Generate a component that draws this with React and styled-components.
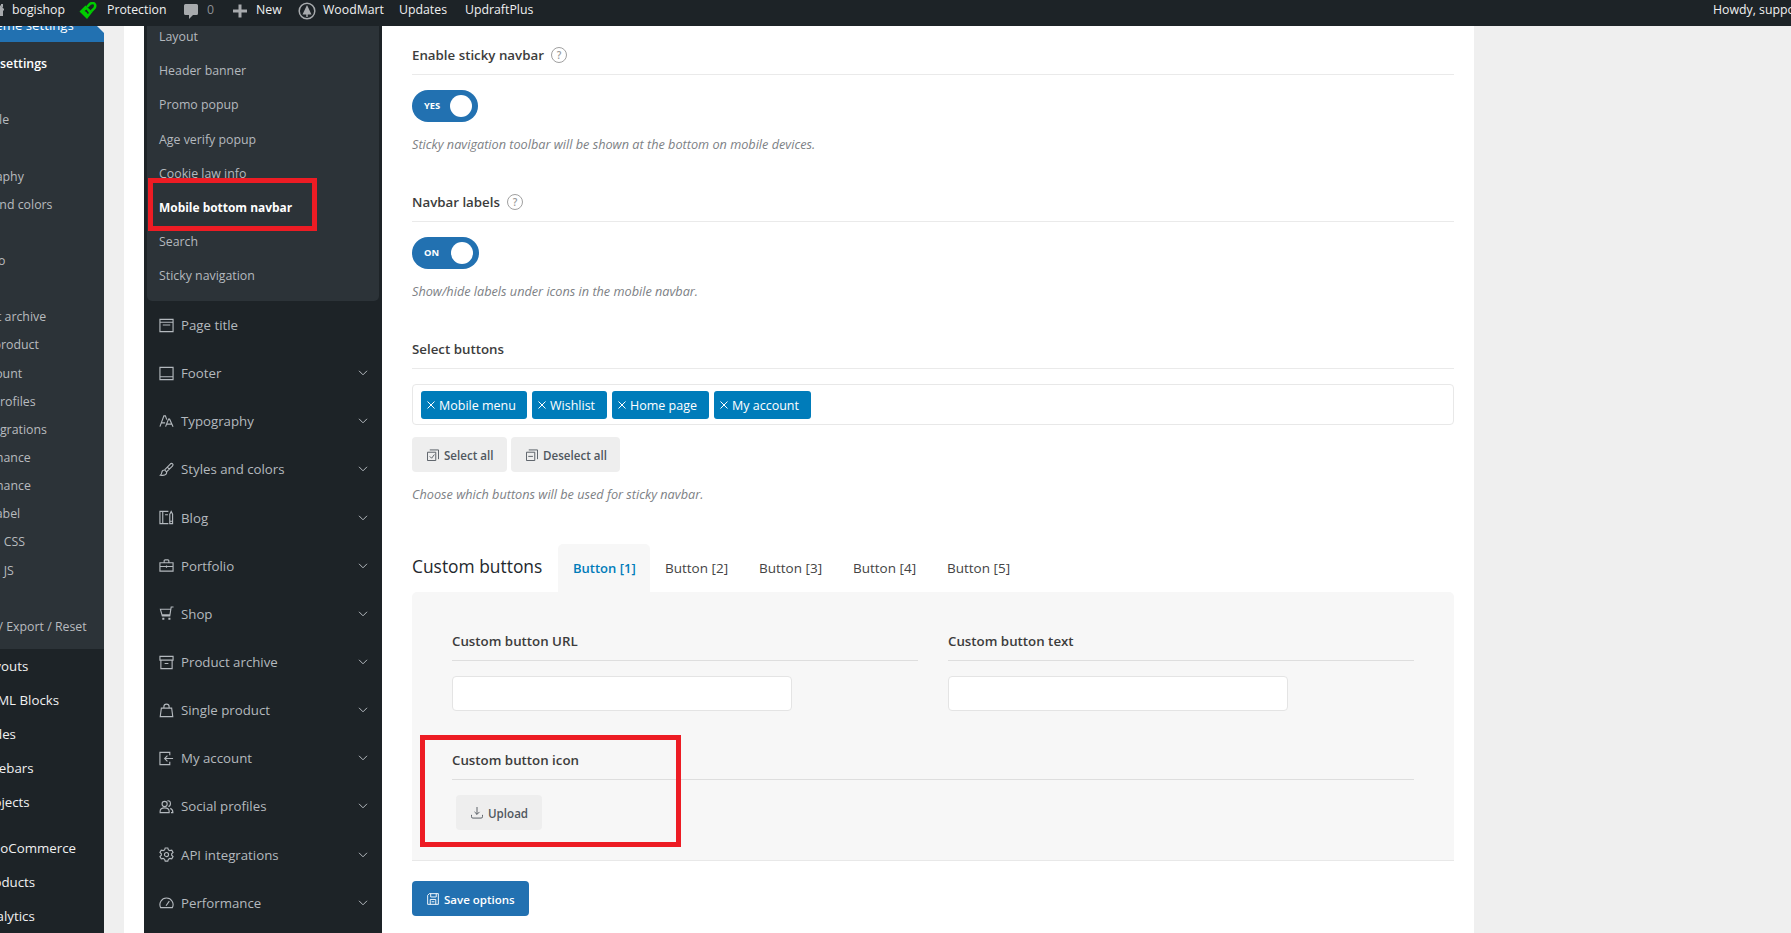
import styled, { createGlobalStyle } from "styled-components";

const ADMIN_MENU = [
  "Layout",
  "Page title",
  "Footer",
  "Typography",
  "Styles and colors",
  "Blog",
  "Portfolio",
  "Shop",
  "Product archive",
  "Single product",
  "My account",
  "Social profiles",
  "API integrations",
  "Performance",
  "Maintenance",
  "White label",
  "Custom CSS",
  "Custom JS",
  "Import",
  "Import / Export / Reset",
];

const SUB_NAV = [
  "Layout",
  "Header banner",
  "Promo popup",
  "Age verify popup",
  "Cookie law info",
  "Mobile bottom navbar",
  "Search",
  "Sticky navigation",
];

const ICONS = {
  page: <path d="M1 1.5h14v13H1zM1 4.5h14M4 7.5h8" />,
  footer: <path d="M1 1.5h14v13H1zM1 11.5h14" />,
  type: <path d="M1 13.5 5.2 2h1.6l1.5 4M2.5 9.5h4M7 13.5l3.2-8h1.1l3.7 8M8.3 10.8h5" />,
  brush: (
    <path d="M6 8.5 12 2.2q1.500-1.200 2.500-.2t-.2 2.500L8 10.500M6 8.500q-2.600-.2-3 2.500-.2 2-1.500 3 4.500.8 6-1 1-1.500.5-2.500zM9 5.500l2 2" />
  ),
  blog: <path d="M10 1.500H1v13h9M4 1.500v13M6.500 5h3M11.500 4.500l1.500-3 1.500 3v10h-3zM11.500 12h3" />,
  portfolio: <path d="M1 5h14v9H1zM5.500 5V3q0-1 1-1h3q1 0 1 1v2M1 9h14M8 8v2.500" />,
  shop: (
    <>
      <path d="M15.500 1H13l-1.500 9.500h-8l-2-7h11M3 9.500h8.500" />
      <path d="M3.500 12.500h2.200v2.200H3.500zM10 12.500h2.200v2.200H10z" fill="#b4b9be" stroke="none" />
    </>
  ),
  archive: <path d="M1 1.500h14v4H1zM2 5.500v9h12v-9M6 9h4" />,
  bag: <path d="M2.500 5.500h11l1.200 9H1.300zM5.200 5.500V4a2.800 2.800 0 0 1 5.600 0v1.500" />,
  account: <path d="M11.500 4.500v-3H1v13h10.500v-3M15 8H6M9 5 6 8l3 3" />,
  social: (
    <path d="M6 2.500a2.500 2.500 0 1 1 0 5.500 2.500 2.500 0 0 1 0-5.500M1.200 14.500V13q0-3.500 4.800-3.500t4.800 3.500v1.500zM9 2q3-.5 3.200 2.500T10 8M12 10q2.800 1 2.800 4.500h-2" />
  ),
  api: (
    <>
      <path d="M6.600 1h2.800l.6 2 1.500.9 2.100-.5 1.400 2.400-1.500 1.500v1.500l1.500 1.500-1.400 2.400-2.100-.5-1.500.9-.6 1.900H6.600L6 13.100l-1.500-.9-2.100.5L1 10.300l1.500-1.500V7.300L1 5.800l1.400-2.400 2.100.5L6 3z" />
      <circle cx="8" cy="8" r="2.200" />
    </>
  ),
  gauge: <path d="M1.800 13.500a7 7 0 1 1 12.400 0zM7.500 11.500l3.500-5" />,
};

const NAV = [
  { label: "Page title", icon: "page", leaf: true },
  { label: "Footer", icon: "footer" },
  { label: "Typography", icon: "type" },
  { label: "Styles and colors", icon: "brush" },
  { label: "Blog", icon: "blog" },
  { label: "Portfolio", icon: "portfolio" },
  { label: "Shop", icon: "shop" },
  { label: "Product archive", icon: "archive" },
  { label: "Single product", icon: "bag" },
  { label: "My account", icon: "account" },
  { label: "Social profiles", icon: "social" },
  { label: "API integrations", icon: "api" },
  { label: "Performance", icon: "gauge" },
];

const TAGS = [
  { label: "Mobile menu", width: 106 },
  { label: "Wishlist", width: 75 },
  { label: "Home page", width: 97 },
  { label: "My account", width: 97 },
];

const App = () => {
  return (
    <Page>
      <GlobalStyle />
      <AdminBar>
        <BarItem $width={79}>
          <HomeIcon viewBox="0 0 5 16">
            <path d="M0 3l4 4v1.500H3V14H0zM1 2h2v3.500L1 4z" fill="#a7aaad" />
          </HomeIcon>
          bogishop
        </BarItem>
        <BarItem $width={104}>
          <LockIcon viewBox="0 0 18 18">
            <path d="m.5 9.500 6-6 7 6.500-5.500 7z" fill="#0c0" />
            <path d="m8 5 3-3.200q3-1.800 4.500 0t0 4.200l-3 3.200" fill="none" stroke="#0c0" strokeWidth="2.500" />
            <path d="m5.500 9 2-1.500 1 1.500 1.500 2-1.200 1-1.500-2z" fill="#1d2327" />
          </LockIcon>
          Protection
        </BarItem>
        <BarItem $width={50} $dim>
          <CommentIcon viewBox="0 0 14 15">
            <path d="M1.500 0h11Q14 0 14 1.500v8q0 1.500-1.500 1.500H9l-4 4v-4H1.500Q0 11 0 9.500v-8Q0 0 1.500 0" fill="#a7aaad" />
          </CommentIcon>
          0
        </BarItem>
        <BarItem $width={65}>
          <PlusIcon viewBox="0 0 14 14">
            <path d="M5.500.5h3v5H14v3H8.500v5h-3v-5H0v-3h5.500z" fill="#a7aaad" />
          </PlusIcon>
          New
        </BarItem>
        <BarItem $width={101}>
          <WoodIcon viewBox="0 0 18 18">
            <circle cx="9" cy="9" r="7.800" fill="none" stroke="#a7aaad" strokeWidth="1.500" />
            <path d="m9 3 4.500 9.500H9.700V15H8.300v-2.500H4.500z" fill="#a7aaad" />
          </WoodIcon>
          WoodMart
        </BarItem>
        <BarItem $width={66}>Updates</BarItem>
        <BarItem $width={80}>UpdraftPlus</BarItem>
        <Howdy>Howdy, support</Howdy>
      </AdminBar>

      <Body>
        <AdminMenu>
          <CurrentItem>Theme settings</CurrentItem>
          <AdminSubMenu>
            <AdminSubItem $active>Theme settings</AdminSubItem>
            {ADMIN_MENU.map((item) => (
              <AdminSubItem key={item}>{item}</AdminSubItem>
            ))}
          </AdminSubMenu>
          <AdminGroup>
            <AdminItem>Layouts</AdminItem>
            <AdminItem>HTML Blocks</AdminItem>
            <AdminItem>Slides</AdminItem>
            <AdminItem>Sidebars</AdminItem>
            <AdminItem>Projects</AdminItem>
          </AdminGroup>
          <AdminGroup>
            <AdminItem>WooCommerce</AdminItem>
            <AdminItem>Products</AdminItem>
            <AdminItem>Analytics</AdminItem>
          </AdminGroup>
        </AdminMenu>

        <Panel>
          <Nav>
            <SubNav>
              {SUB_NAV.map((item) => (
                <SubNavItem key={item} $active={item === "Mobile bottom navbar"}>
                  {item}
                  {item === "Mobile bottom navbar" && <NavMarker />}
                </SubNavItem>
              ))}
            </SubNav>
            {NAV.map(({ label, icon, leaf }) => (
              <NavItem key={label}>
                <NavIcon viewBox="0 0 16 16">{ICONS[icon]}</NavIcon>
                <NavLabel>{label}</NavLabel>
                {!leaf && (
                  <Chevron viewBox="0 0 10 6">
                    <path d="m1 .8 4 4 4-4" />
                  </Chevron>
                )}
              </NavItem>
            ))}
          </Nav>

          <Content>
            <Field $height={147}>
              <FieldTitle>
                Enable sticky navbar <Help>?</Help>
              </FieldTitle>
              <Toggle $width={66}>
                YES <Knob />
              </Toggle>
              <Description>
                Sticky navigation toolbar will be shown at the bottom on mobile devices.
              </Description>
            </Field>

            <Field $height={147}>
              <FieldTitle>
                Navbar labels <Help>?</Help>
              </FieldTitle>
              <Toggle $width={67}>
                ON <Knob />
              </Toggle>
              <Description>Show/hide labels under icons in the mobile navbar.</Description>
            </Field>

            <Field $height={208}>
              <FieldTitle>Select buttons</FieldTitle>
              <TagBox>
                {TAGS.map(({ label, width }) => (
                  <Tag key={label} $width={width}>
                    <Cross viewBox="0 0 8 8">
                      <path d="m.5.500 7 7m0-7-7 7" />
                    </Cross>
                    {label}
                  </Tag>
                ))}
              </TagBox>
              <ButtonRow>
                <Button $width={95}>
                  <ButtonIcon viewBox="0 0 13 13">
                    <path d="M.5 3.500h9v9h-9zM3 1h9.500v10M3 8l2 2 3-4" />
                  </ButtonIcon>
                  Select all
                </Button>
                <Button $width={109}>
                  <ButtonIcon viewBox="0 0 13 13">
                    <path d="M.5 3.500h9v9h-9zM3 1h9.500v10M2.500 8h5" />
                  </ButtonIcon>
                  Deselect all
                </Button>
              </ButtonRow>
              <Description>Choose which buttons will be used for sticky navbar.</Description>
            </Field>

            <TabRow>
              <TabHeading>Custom buttons</TabHeading>
              {[1, 2, 3, 4, 5].map((n) => (
                <Tab key={n} $active={n === 1}>
                  Button [{n}]
                </Tab>
              ))}
            </TabRow>
            <TabPanel>
              <Columns>
                <Column>
                  <FieldTitle $boxed>Custom button URL</FieldTitle>
                  <Input />
                </Column>
                <Column>
                  <FieldTitle $boxed>Custom button text</FieldTitle>
                  <Input />
                </Column>
              </Columns>
              <IconField>
                <FieldTitle $boxed>Custom button icon</FieldTitle>
                <UploadRow>
                  <Button $width={86}>
                    <ButtonIcon viewBox="0 0 13 13">
                      <path d="M6.500 0v8M3.800 5.300 6.500 8l2.700-2.700M.5 8.500v2Q.5 12 2 12h9q1.500 0 1.500-1.500v-2" />
                    </ButtonIcon>
                    Upload
                  </Button>
                </UploadRow>
                <IconMarker />
              </IconField>
            </TabPanel>

            <SaveRow>
              <Button $width={117} $primary>
                <ButtonIcon viewBox="0 0 13 13">
                  <path d="M2.500.7h9.800v11.600H.7V2.500zM4 .7v3.600h6V.7M3.500 12.300V7h6v5.300M5 9.500h3" />
                </ButtonIcon>
                Save options
              </Button>
            </SaveRow>
          </Content>
        </Panel>
      </Body>
    </Page>
  );
};

const GlobalStyle = createGlobalStyle`
  * {
    box-sizing: border-box;
  }

  body {
    margin: 0;
    overflow: hidden;
    background: #efefef;
    font-family: "Segoe UI", "Open Sans", "Noto Sans", sans-serif;
  }
`;

const Page = styled.div`
  width: 1791px;
  height: 933px;
  overflow: hidden;
`;

const AdminBar = styled.header`
  display: flex;
  height: 26px;
  background: #1d2327;
  color: #f0f0f1;
  font-size: 12.3px;
  line-height: 20px;
  white-space: nowrap;
  overflow: hidden;
`;

const BarItem = styled.div`
  display: flex;
  align-items: center;
  flex: none;
  width: ${(props) => props.$width}px;
  height: 20px;
  color: ${(props) => props.$dim && "#8c8f94"};
`;

const BarIcon = styled.svg`
  flex: none;
  display: block;
`;

const HomeIcon = styled(BarIcon)`
  width: 5px;
  height: 16px;
  margin-right: 7px;
`;

const LockIcon = styled(BarIcon)`
  width: 18px;
  height: 18px;
  margin: 2px 10px 0 0;
`;

const CommentIcon = styled(BarIcon)`
  width: 14px;
  height: 15px;
  margin: 3px 9px 0 1px;
`;

const PlusIcon = styled(BarIcon)`
  width: 14px;
  height: 14px;
  margin: 1px 9px 0 0;
`;

const WoodIcon = styled(BarIcon)`
  width: 18px;
  height: 18px;
  margin: 1px 7px 0 0;
`;

const Howdy = styled.div`
  flex: none;
  width: 78px;
  margin-left: auto;
  overflow: hidden;
`;

const Body = styled.div`
  display: flex;
  height: 907px;
  overflow: hidden;
`;

const AdminMenu = styled.aside`
  flex: none;
  width: 104px;
  background: #1d2327;
  color: #f0f0f1;
  white-space: nowrap;
  overflow: hidden;
`;

const CurrentItem = styled.div`
  position: relative;
  height: 34px;
  margin-top: -18px;
  background: #2271b1;
  color: white;
  font-size: 13.2px;
  line-height: 34px;
  text-indent: -20px;

  &::after {
    content: "";
    position: absolute;
    right: 0;
    top: 9px;
    border: 8px solid transparent;
    border-right-color: #efefef;
  }
`;

const AdminSubMenu = styled.div`
  height: 607px;
  padding-top: 8px;
  background: #2c3338;
`;

const AdminSubItem = styled.div`
  height: 28.15px;
  color: ${(props) => (props.$active ? "white" : "#b8bbbf")};
  font-size: 12.35px;
  font-weight: ${(props) => (props.$active ? 600 : 400)};
  line-height: 28px;
  text-indent: -44px;
`;

const AdminGroup = styled.div`
  margin-bottom: 12px;
`;

const AdminItem = styled.div`
  height: 34px;
  font-size: 13.3px;
  line-height: 34px;
  text-indent: -20px;
`;

const Panel = styled.div`
  display: flex;
  width: 1350px;
  margin-left: 20px;
  padding-left: 20px;
  background: white;
`;

const Nav = styled.nav`
  flex: none;
  width: 238px;
  height: 907px;
  padding: 0 3px;
  background: #1d2327;
  color: #b4b9be;
  overflow: hidden;
`;

const SubNav = styled.div`
  height: 275px;
  padding: 0 12px;
  border-radius: 0 0 5px 5px;
  background: #2c3338;
  overflow: hidden;
`;

const SubNavItem = styled.div`
  position: relative;
  height: 34.2px;
  color: ${(props) => (props.$active ? "white" : "#b4b9be")};
  font-size: ${(props) => (props.$active ? 11.95 : 12.35)}px;
  font-weight: ${(props) => (props.$active ? 700 : 400)};
  line-height: 34px;

  &:first-child {
    margin-top: -6px;
  }
`;

const Marker = styled.div`
  position: absolute;
  border: 5px solid #ed1c24;
`;

const NavMarker = styled(Marker)`
  left: -11px;
  top: -13px;
  width: 169px;
  height: 53px;
`;

const NavItem = styled.div`
  display: flex;
  align-items: center;
  height: 48.15px;
  padding: 0 11px 0 12px;
`;

const NavIcon = styled.svg`
  flex: none;
  width: 15px;
  height: 15px;
  fill: none;
  stroke: #b4b9be;
  stroke-width: 1.2;
`;

const NavLabel = styled.span`
  flex: 1;
  margin-left: 7px;
  font-size: 13.25px;
`;

const Chevron = styled.svg`
  width: 10px;
  height: 6px;
  fill: none;
  stroke: #b4b9be;
`;

const Content = styled.main`
  width: 1092px;
  padding: 11px 20px 0 30px;
`;

const Field = styled.section`
  height: ${(props) => props.$height}px;
`;

const FieldTitle = styled.h3`
  display: flex;
  align-items: center;
  gap: 7px;
  height: 38px;
  margin: 0 0 15px;
  padding-bottom: 2px;
  border-bottom: 1px solid ${(props) => (props.$boxed ? "#dedede" : "#eaeaea")};
  color: #3c3c3c;
  font-size: 13.3px;
  font-weight: 550;
`;

const Help = styled.span`
  width: 16px;
  height: 16px;
  border: 1px solid #a0a0a0;
  border-radius: 50%;
  color: #999;
  font-size: 10px;
  font-weight: 600;
  line-height: 14px;
  text-align: center;
`;

const Toggle = styled.div`
  display: flex;
  align-items: center;
  justify-content: space-between;
  width: ${(props) => props.$width}px;
  height: 32px;
  padding: 0 6px 0 12px;
  border-radius: 16px;
  background: #2271b1;
  color: white;
  font-size: 9.4px;
  font-weight: 700;
  line-height: 12px;
`;

const Knob = styled.span`
  width: 22px;
  height: 22px;
  border-radius: 50%;
  background: white;
`;

const Description = styled.p`
  margin: 12px 0 0;
  color: #7d8185;
  font-size: 12.7px;
  font-style: italic;
  line-height: 20px;
`;

const TagBox = styled.div`
  display: flex;
  gap: 5px;
  height: 41px;
  padding: 6px 8px;
  border: 1px solid #e8e8e8;
  border-radius: 4px;
`;

const Tag = styled.div`
  display: flex;
  align-items: center;
  gap: 4px;
  width: ${(props) => props.$width}px;
  height: 28px;
  padding-left: 6px;
  border-radius: 3px;
  background: #007cba;
  color: white;
  font-size: 12.5px;
  font-weight: 500;
  white-space: nowrap;
`;

const Cross = styled.svg`
  width: 8px;
  height: 8px;
  stroke: white;
`;

const ButtonRow = styled.div`
  display: flex;
  gap: 4px;
  margin-top: 12px;
`;

const Button = styled.button`
  display: flex;
  align-items: center;
  gap: 5px;
  width: ${(props) => props.$width}px;
  height: 35px;
  padding: 1px 0 0 15px;
  border: none;
  border-radius: 4px;
  background: ${(props) => (props.$primary ? "#2271b1" : "#eeeeee")};
  color: ${(props) => (props.$primary ? "white" : "#50575e")};
  font-family: inherit;
  font-size: ${(props) => (props.$primary ? 11.5 : 11.6)}px;
  font-weight: ${(props) => (props.$primary ? 600 : 550)};
  white-space: nowrap;
`;

const ButtonIcon = styled.svg`
  flex: none;
  width: 12px;
  height: 12px;
  margin-top: -1px;
  fill: none;
  stroke: currentColor;
`;

const TabRow = styled.div`
  display: flex;
  height: 48px;
  margin-top: 5px;
`;

const TabHeading = styled.h2`
  width: 146px;
  margin: 0;
  color: #23282d;
  font-size: 17.4px;
  font-weight: 500;
  line-height: 45px;
`;

const Tab = styled.div`
  width: ${(props) => (props.$active ? 92 : 94)}px;
  padding-left: 15px;
  border-radius: 5px 5px 0 0;
  background: ${(props) => props.$active && "#f7f7f7"};
  color: ${(props) => (props.$active ? "#007cba" : "#444")};
  font-size: ${(props) => (props.$active ? 13 : 13.5)}px;
  font-weight: ${(props) => (props.$active ? 600 : 500)};
  line-height: 48px;
`;

const TabPanel = styled.div`
  height: 269px;
  padding: 31px 40px 0;
  border-bottom: 1px solid #e8e8e8;
  border-radius: 5px 5px 0 0;
  background: #f7f7f7;
`;

const Columns = styled.div`
  display: grid;
  grid-template-columns: 1fr 1fr;
  gap: 30px;
`;

const Column = styled.div`
  height: 119px;
`;

const Input = styled.input`
  display: block;
  width: 340px;
  height: 35px;
  border: 1px solid #e4e4e4;
  border-radius: 4px;
  background: white;
`;

const IconField = styled.div`
  position: relative;
`;

const UploadRow = styled.div`
  padding-left: 4px;
`;

const IconMarker = styled(Marker)`
  left: -32px;
  top: -7px;
  width: 261px;
  height: 112px;
`;

const SaveRow = styled.div`
  margin-top: 20px;
`;

export default App;
